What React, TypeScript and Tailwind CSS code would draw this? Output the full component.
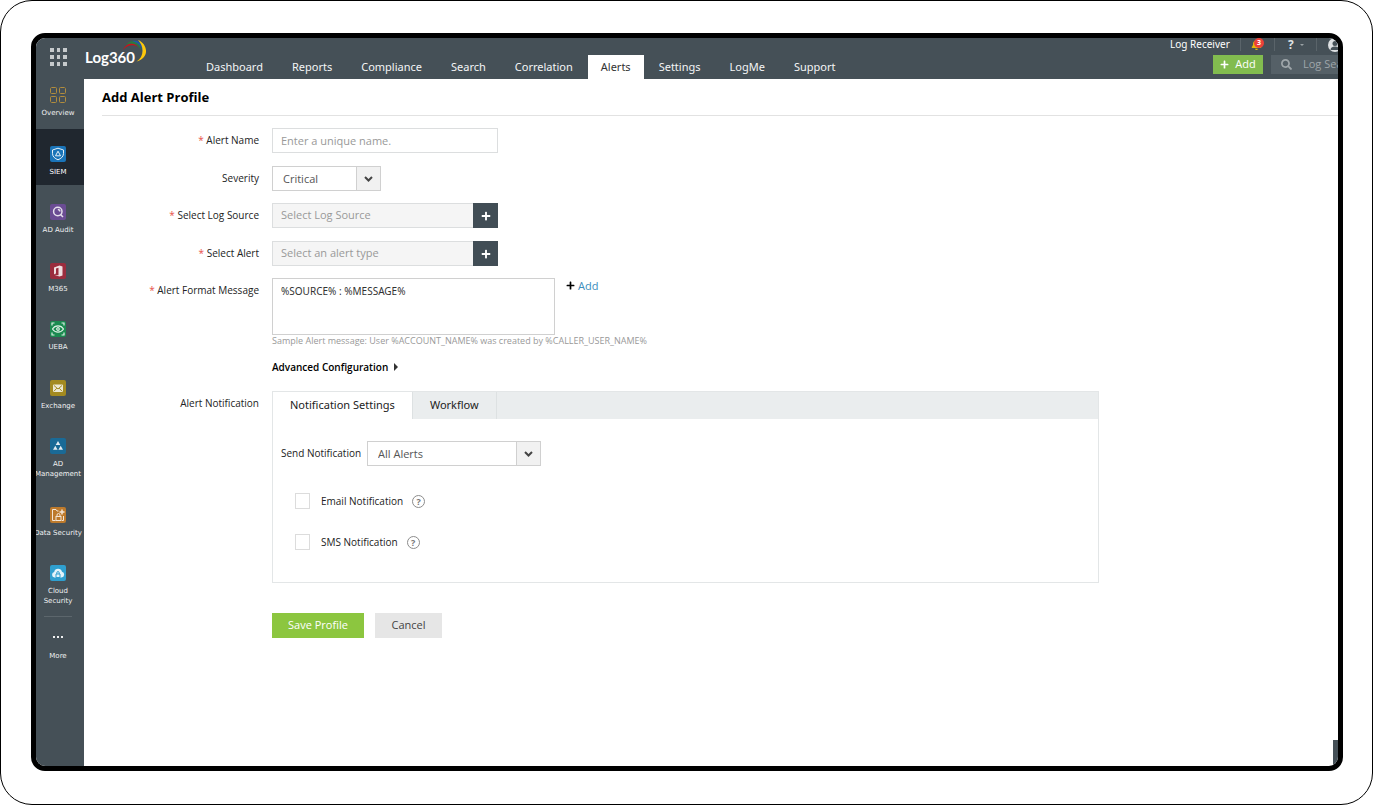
import { useState, type ReactNode } from "react";
import { FaBell, FaPlus, FaSearch } from "react-icons/fa";

type Product = {
  label: string;
  color: string;
  icon: ReactNode;
};

const navItems = [
  "Dashboard",
  "Reports",
  "Compliance",
  "Search",
  "Correlation",
  "Alerts",
  "Settings",
  "LogMe",
  "Support",
];

// Glyphs are drawn on a 16x16 tile
const products: Product[] = [
  {
    label: "Overview",
    color: "",
    icon: (
      <g fill="none" stroke="#b18c3d">
        <rect x="0.5" y="0.5" width="6" height="6" rx="1" />
        <rect x="9.5" y="0.5" width="6" height="6" rx="1" />
        <rect x="0.5" y="9.5" width="6" height="6" rx="1" />
        <rect x="9.5" y="9.5" width="6" height="6" rx="1" />
      </g>
    ),
  },
  {
    label: "SIEM",
    color: "bg-[#1a74b8]",
    icon: (
      <g fill="none" stroke="#e6f1f8">
        <path d="M8 2.2 13.500 4v3.600c0 3-2.500 5-5.500 6.200-3-1.200-5.500-3.200-5.500-6.200V4Z" />
        <path d="M8 5.200 10.500 9.800h-5Z" />
      </g>
    ),
  },
  {
    label: "AD Audit",
    color: "bg-[#6a4c93]",
    icon: (
      <g fill="none" stroke="#e4deec" strokeWidth="1.500">
        <circle cx="7.800" cy="7.500" r="4.200" />
        <path d="M10.500 10.500 13 13M7.800 5.500a2 2 0 0 1 2 2" />
      </g>
    ),
  },
  {
    label: "M365",
    color: "bg-[#9b2d3e]",
    icon: (
      <path
        fill="#f0dfe1"
        fillRule="evenodd"
        d="M4 4.500 9.500 2.500 12.500 3.500v9l-3 1L4 11.800l4.500.500V4.800L6 5.500v5L4 11.300Z"
      />
    ),
  },
  {
    label: "UEBA",
    color: "bg-[#1b8a50]",
    icon: (
      <g fill="none" stroke="#dcefe4" strokeWidth="1.200">
        <path d="M2 4.500V2h2.500M11.500 2H14v2.500M14 11.500V14h-2.500M4.500 14H2v-2.500" />
        <path d="M2.500 8C4 5.500 6 4.800 8 4.800S12 5.500 13.500 8C12 10.500 10 11.200 8 11.200S4 10.500 2.500 8Z" />
        <circle cx="8" cy="8" r="1.300" />
      </g>
    ),
  },
  {
    label: "Exchange",
    color: "bg-[#a38a20]",
    icon: (
      <g>
        <rect x="3" y="4.500" width="10" height="7.500" rx="1" fill="#ece8d2" />
        <path
          d="m4 5.500 4 3.500 4-3.500M4 11.200l2.800-3M12 11.200l-2.800-3"
          fill="none"
          stroke="#a38a20"
        />
      </g>
    ),
  },
  {
    label: "AD Management",
    color: "bg-[#1a6a96]",
    icon: (
      <path
        fill="#e2ecf2"
        d="M8 3 10.300 7H5.700ZM5.300 7.800 7.600 11.800H3ZM10.700 7.800 13 11.800H8.400Z"
      />
    ),
  },
  {
    label: "Data Security",
    color: "bg-[#bd7a2c]",
    icon: (
      <g fill="none" stroke="#f4e6d6">
        <path d="M8.500 4H7L6 2.500H2.500v11h3M13.500 9v4.500H12" />
        <path d="M12 2.500v5M9.500 5h5" strokeWidth="1.500" />
        <rect x="6" y="9.500" width="5" height="4" />
        <path d="M7 9.500V8a1.500 1.500 0 0 1 3 0v1.500" />
      </g>
    ),
  },
  {
    label: "Cloud Security",
    color: "bg-[#2f9fcf]",
    icon: (
      <g>
        <path
          fill="#e3f3fa"
          d="M4.500 12.500a2.800 2.800 0 0 1-.3-5.500A4 4 0 0 1 12 6.800a2.900 2.900 0 0 1-.5 5.700Z"
        />
        <path
          d="M6 9h4v3.500H6ZM6.800 9V7.800a1.200 1.200 0 0 1 2.400 0V9"
          fill="none"
          stroke="#2f9fcf"
        />
      </g>
    ),
  },
];

function Logo() {
  return (
    <a href="#home" className="relative ml-[18px] block w-[66px] text-white">
      <span className="font-[Lato,sans-serif] text-[15px] leading-[38px] font-bold">
        Log360
      </span>
      <svg
        className="absolute top-[1px] left-[38px]"
        width="26"
        height="24"
        viewBox="0 0 26 24"
        aria-hidden="true"
      >
        <path d="M0 11C3 4 10 2 15 8 10 5 4 6 0 11Z" fill="#c4161c" />
        <path d="M3 6C8-.5 17 1 18 11 14.500 4.500 9 3 3 6Z" fill="#2c7a3f" />
        <path d="M9 2c8-2 14 5 10.500 14C20.500 9 16 4 9 2Z" fill="#2458a4" />
        <path d="M15 1c10 4 12 18-1.500 21.500C21 18 21.500 7.500 15 1Z" fill="#fdc70c" />
      </svg>
    </a>
  );
}

function Header() {
  return (
    <header className="flex h-[41px] shrink-0 bg-[#455057]">
      <button
        aria-label="Apps"
        className="mt-[10px] ml-[14px] grid h-[17px] w-[17px] shrink-0 grid-cols-3 gap-[3px] self-start"
      >
        {Array(9)
          .fill(0)
          .map((_, i) => (
            <span key={i} className="h-[4px] bg-[#c6cacc]" />
          ))}
      </button>
      <Logo />

      <nav className="ml-[41px] flex items-end gap-px font-['Noto_Sans',sans-serif] text-[11px] leading-[24px] text-[#f4f5f6]">
        {navItems.map((item) => (
          <a
            key={item}
            href={`#${item.toLowerCase()}`}
            className={
              item === "Alerts" ? "bg-white px-[13px] text-[#333]" : "px-[14px]"
            }
          >
            {item}
          </a>
        ))}
      </nav>

      {/* Utilities, cut off at the screen edge */}
      <div className="ml-auto w-[168px] shrink-0 overflow-hidden">
        <div className="flex h-[13px] w-[200px] items-center text-[11px] text-white">
          <a
            href="#receiver"
            className="w-[70px] font-['Noto_Sans',sans-serif] text-[10px] leading-[13px]"
          >
            Log Receiver
          </a>
          <button
            aria-label="Alerts, 3 new"
            className="relative flex h-[13px] w-[34px] items-center border-l border-[#5a646a] pl-[10px]"
          >
            <FaBell className="text-[11px] text-[#e5b80b]" />
            <span className="absolute top-0 left-[13px] h-[10px] w-[10px] rounded-full bg-[#ec4138] text-center text-[7px] leading-[10px] font-bold">
              3
            </span>
          </button>
          <button
            aria-label="Help"
            className="flex w-[42px] items-center gap-[6px] border-l border-[#5a646a] pl-[13px] text-[12px] leading-[13px] font-bold text-[#dfe2e3]"
          >
            ?
            <span className="border-x-2 border-t-2 border-x-transparent border-t-[#9aa1a5]" />
          </button>
          <button
            aria-label="Account"
            className="flex h-[13px] items-center border-l border-[#5a646a] pl-[11px]"
          >
            <svg width="14" height="14" viewBox="0 0 14 14">
              <circle cx="7" cy="7" r="7" fill="#dde0e2" />
              <circle cx="7" cy="5.500" r="2.500" fill="#455057" />
              <path d="M2.500 12a4.500 3.500 0 0 1 9 0Z" fill="#455057" />
            </svg>
          </button>
        </div>
        <div className="mt-[4px] ml-[43px] flex w-[160px] gap-[8px]">
          <button className="flex h-[19px] w-[50px] shrink-0 items-center justify-center gap-[6px] bg-[#82bc4f] text-[11px] text-white">
            <FaPlus className="text-[9px]" />
            Add
          </button>
          <label className="flex h-[19px] items-center gap-[11px] bg-[#556067] pl-[10px] text-[#9fa6aa]">
            <FaSearch className="shrink-0 text-[11px]" />
            <input
              aria-label="Log Search"
              placeholder="Log Search"
              className="w-[70px] bg-transparent text-[11px] outline-none placeholder:text-[#9fa6aa]"
            />
          </label>
        </div>
      </div>
    </header>
  );
}

function Sidebar() {
  return (
    <aside className="w-[48px] shrink-0 bg-[#455057] font-['DejaVu_Sans',sans-serif] text-[7px] leading-[10px] text-[#f0f1f2]">
      <nav className="flex h-[535px] flex-col justify-between">
        {products.map((product) => (
          <a
            key={product.label}
            href={`#${product.label}`}
            className={`flex flex-col items-center gap-[5px] pr-[4px] pb-[8px] ${
              product.label === "SIEM" ? "bg-[#20272f] text-white" : ""
            } ${product.label === "Overview" ? "pt-[8px]" : "pt-[17px]"}`}
          >
            <svg
              width="16"
              height="16"
              viewBox="0 0 16 16"
              className={`rounded-[2px] ${product.color}`}
              aria-hidden="true"
            >
              {product.icon}
            </svg>
            <span
              className={`-mx-2 text-center ${
                product.label === "Data Security"
                  ? "whitespace-nowrap"
                  : "max-w-[48px]"
              }`}
            >
              {product.label}
            </span>
          </a>
        ))}
      </nav>
      <button className="mt-[2px] ml-[8px] flex w-[28px] flex-col items-center gap-[13px] border-t border-[#5c666c] pt-[19px]">
        <span className="flex gap-[2px]">
          <span className="h-[2px] w-[2px] bg-[#f0f1f2]" />
          <span className="h-[2px] w-[2px] bg-[#f0f1f2]" />
          <span className="h-[2px] w-[2px] bg-[#f0f1f2]" />
        </span>
        More
      </button>
    </aside>
  );
}

type FieldLabelProps = {
  htmlFor?: string;
  required?: boolean;
  children: ReactNode;
};

function FieldLabel({ htmlFor, required, children }: FieldLabelProps) {
  return (
    <label
      htmlFor={htmlFor}
      className="w-[157px] shrink-0 text-right text-[10px] leading-[25px] text-[#222]"
    >
      {required && <span className="text-[#e8504a]">* </span>}
      {children}
    </label>
  );
}

type DropDownProps = {
  id: string;
  options: string[];
  className: string;
};

function DropDown({ id, options, className }: DropDownProps) {
  return (
    <div className={`relative flex h-[25px] ${className}`}>
      <select
        id={id}
        className="h-[25px] w-full appearance-none border border-[#d0d0d0] bg-white pl-[10px] text-[11px] leading-[22px] text-[#555] outline-none"
      >
        {options.map((option) => (
          <option key={option}>{option}</option>
        ))}
      </select>
      <span className="pointer-events-none absolute inset-y-0 right-0 flex w-[25px] items-center justify-center border border-[#d0d0d0] bg-[#f1f1f1]">
        <svg width="9" height="6" viewBox="0 0 9 6" aria-hidden="true">
          <path
            d="m1 1 3.500 3.500L8 1"
            fill="none"
            stroke="#444"
            strokeWidth="2"
          />
        </svg>
      </span>
    </div>
  );
}

type PickerProps = {
  id: string;
  placeholder: string;
};

function Picker({ id, placeholder }: PickerProps) {
  return (
    <div className="flex h-[25px] w-[226px]">
      <input
        id={id}
        readOnly
        placeholder={placeholder}
        className="min-w-0 flex-1 border border-r-0 border-[#dcdedf] bg-[#f5f5f5] px-[8px] text-[11px] outline-none placeholder:text-[#999]"
      />
      <button
        type="button"
        aria-label={placeholder}
        className="flex w-[25px] items-center justify-center bg-[#414d55] text-[10px] text-white"
      >
        <FaPlus />
      </button>
    </div>
  );
}

function NotifyOption({ id, label }: { id: string; label: string }) {
  return (
    <div className="flex h-[16px] items-center">
      <input
        id={id}
        type="checkbox"
        className="h-[16px] w-[15px] appearance-none border border-[#dcdcdc] bg-white checked:bg-[#8cc63f]"
      />
      <label htmlFor={id} className="ml-[11px] text-[10px] text-[#222]">
        {label}
      </label>
      <button
        type="button"
        aria-label={`About ${label}`}
        className="ml-[9px] flex h-[13px] w-[13px] items-center justify-center rounded-full border border-[#8c8c8c] text-[9px] leading-none font-bold text-[#777]"
      >
        ?
      </button>
    </div>
  );
}

export default function App() {
  const [message, setMessage] = useState("%SOURCE% : %MESSAGE%");
  const [tab, setTab] = useState("Notification Settings");

  return (
    <div className="flex min-h-screen rounded-[32px] border border-black bg-white pt-[32px] pr-[29px] pb-[33px] pl-[30px] font-['Open_Sans','Noto_Sans',sans-serif]">
      <div className="relative flex min-w-0 flex-1 flex-col overflow-hidden rounded-[14px] border-5 border-black bg-white">
        <Header />
        <div className="flex flex-1">
          <Sidebar />

          <main className="min-w-0 flex-1 pl-[18px]">
            <h1 className="border-b border-[#e2e2e2] text-[13px] leading-[36px] font-bold text-black">
              Add Alert Profile
            </h1>

            <form
              className="mt-[12px] flex flex-col gap-[13px]"
              onSubmit={(e) => e.preventDefault()}
            >
              <div className="flex gap-[13px]">
                <FieldLabel htmlFor="name" required>
                  Alert Name
                </FieldLabel>
                <input
                  id="name"
                  placeholder="Enter a unique name."
                  className="h-[25px] w-[226px] border border-[#dcdedf] px-[8px] text-[11px] outline-none placeholder:text-[#999]"
                />
              </div>

              <div className="flex gap-[13px]">
                <FieldLabel htmlFor="severity">Severity</FieldLabel>
                <DropDown
                  id="severity"
                  options={["Critical", "Trouble", "Attention"]}
                  className="w-[109px]"
                />
              </div>

              <div className="-mt-px flex gap-[13px]">
                <FieldLabel htmlFor="source" required>
                  Select Log Source
                </FieldLabel>
                <Picker id="source" placeholder="Select Log Source" />
              </div>

              <div className="flex gap-[13px]">
                <FieldLabel htmlFor="alert" required>
                  Select Alert
                </FieldLabel>
                <Picker id="alert" placeholder="Select an alert type" />
              </div>

              <div className="-mt-px flex gap-[13px]">
                <FieldLabel htmlFor="format" required>
                  Alert Format Message
                </FieldLabel>
                <div>
                  <div className="flex items-start">
                    <textarea
                      id="format"
                      value={message}
                      onChange={(e) => setMessage(e.target.value)}
                      className="block h-[57px] w-[283px] resize-none border border-[#d0d0d0] px-[8px] py-[5px] font-['Noto_Sans',sans-serif] text-[10px] leading-[15px] text-[#333] outline-none"
                    />
                    <button
                      type="button"
                      className="ml-[11px] flex items-center gap-[3px] text-[11px] leading-[15px] text-[#3c8dbc]"
                    >
                      <FaPlus className="text-[9px] text-black" />
                      Add
                    </button>
                  </div>
                  <p className="text-[9px] leading-[12px] text-[#999]">
                    Sample Alert message: User %ACCOUNT_NAME% was created by
                    %CALLER_USER_NAME%
                  </p>
                  <button
                    type="button"
                    className="mt-[12px] flex items-center gap-[6px] text-[10px] leading-[16px] font-semibold text-black"
                  >
                    Advanced Configuration
                    <span className="border-y-4 border-l-4 border-y-transparent border-l-[#333]" />
                  </button>
                </div>
              </div>

              <div className="mt-[3px] flex gap-[13px]">
                <FieldLabel>Alert Notification</FieldLabel>
                <div className="min-w-0 flex-1">
                  <section className="h-[192px] max-w-[827px] border border-[#e3e6e7]">
                    <div className="flex h-[27px] bg-[#eaedee] font-['Noto_Sans',sans-serif] text-[11px] text-[#222]">
                      {["Notification Settings", "Workflow"].map((name) => (
                        <button
                          key={name}
                          type="button"
                          onClick={() => setTab(name)}
                          className={`border-r border-[#dde1e2] px-[17px] ${
                            tab === name ? "bg-white" : ""
                          }`}
                        >
                          {name}
                        </button>
                      ))}
                    </div>
                    <div className="mt-[22px] ml-[8px] flex items-center gap-[6px]">
                      <label htmlFor="send" className="text-[10px] text-[#222]">
                        Send Notification
                      </label>
                      <DropDown
                        id="send"
                        options={["All Alerts", "First Alert"]}
                        className="w-[174px]"
                      />
                    </div>
                    <div className="mt-[27px] ml-[22px] flex flex-col gap-[25px]">
                      <NotifyOption id="email" label="Email Notification" />
                      <NotifyOption id="sms" label="SMS Notification" />
                    </div>
                  </section>

                  <div className="mt-[30px] flex gap-[11px] text-[11px]">
                    <button
                      type="submit"
                      className="h-[25px] w-[92px] bg-[#8cc63f] text-white"
                    >
                      Save Profile
                    </button>
                    <button
                      type="button"
                      className="h-[25px] w-[67px] bg-[#e6e6e6] text-[#444]"
                    >
                      Cancel
                    </button>
                  </div>
                </div>
              </div>
            </form>
          </main>
        </div>

        {/* Edge of the docked chat panel */}
        <div className="absolute right-0 bottom-0 h-[26px] w-[5px] bg-[#455057]" />
      </div>
    </div>
  );
}
